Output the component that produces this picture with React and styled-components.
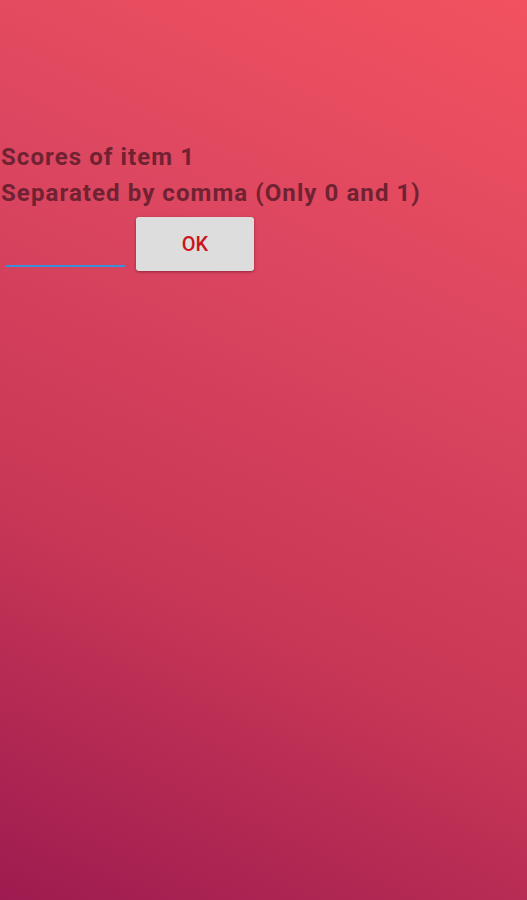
import styled, { createGlobalStyle } from "styled-components";
import { useState } from "react";

const GlobalStyle = createGlobalStyle`
  html, body {
    margin: 0;
    padding: 0;
  }
  body {
    font-family: Roboto, "Liberation Sans", sans-serif;
  }
`;

const Screen = styled.div`
  width: 527px;
  height: 900px;
  box-sizing: border-box;
  padding-top: 139px;
  background: linear-gradient(
    205deg,
    #f2525f 0%,
    #de4760 30%,
    #c83756 65%,
    #9e1b50 100%
  );
  overflow: hidden;
`;

const Prompt = styled.div`
  font-size: 24px;
  font-weight: 700;
  letter-spacing: 1.08px;
  line-height: 36px;
  color: #6f2232;
  padding-left: 1px;
  white-space: nowrap;
`;

const InputRow = styled.div`
  display: flex;
  align-items: flex-start;
  margin-top: 6px;
`;

const ScoreInput = styled.input`
  width: 119px;
  height: 50px;
  margin: 0 11px 0 6px;
  padding: 0;
  box-sizing: border-box;
  border: none;
  border-bottom: 2px solid #3a8fd8;
  background: transparent;
  font-family: inherit;
  font-size: 18px;
  color: #3a0c18;
  outline: none;
`;

const OkButton = styled.button`
  width: 118px;
  height: 54px;
  border: none;
  border-radius: 3px;
  background: #dddddd;
  box-shadow: 0 1px 3px rgba(60, 0, 20, 0.45);
  font-family: inherit;
  font-size: 20px;
  font-weight: 500;
  color: #cc1420;
  cursor: pointer;
`;

const App = () => {
  const [scores, setScores] = useState("");
  return (
    <Screen>
      <GlobalStyle />
      <Prompt>Scores of item 1</Prompt>
      <Prompt>Separated by comma (Only 0 and 1)</Prompt>
      <InputRow>
        <ScoreInput
          value={scores}
          onChange={(e) => setScores(e.target.value)}
        />
        <OkButton>OK</OkButton>
      </InputRow>
    </Screen>
  );
};

export default App;
